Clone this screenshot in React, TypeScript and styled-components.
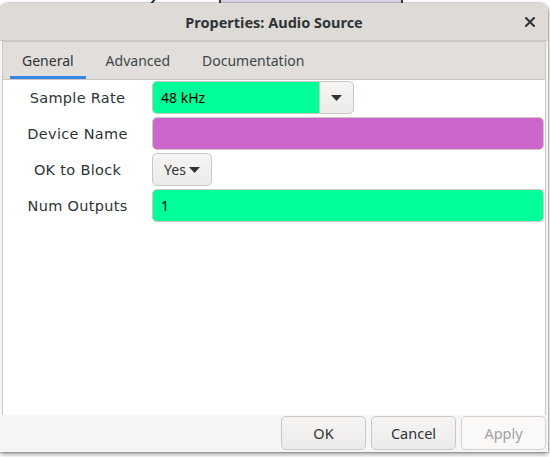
import styled, { createGlobalStyle } from "styled-components";

const GlobalStyle = createGlobalStyle`
  html, body {
    margin: 0;
    padding: 0;
    background: #ffffff;
    overflow: hidden;
  }
`;

const Desktop = styled.div`
  position: relative;
  width: 550px;
  height: 457px;
  padding-top: 3px;
  box-sizing: border-box;
  background: #ffffff;
  font-family: "Noto Sans", "DejaVu Sans", sans-serif;
  color: #2e3436;
`;

/* things on the canvas behind the dialog */
const BehindWire = styled.div`
  position: absolute;
  left: 152px;
  top: -3px;
  width: 2px;
  height: 9px;
  background: #2e3436;
  transform: rotate(40deg);
`;

const BehindBlock = styled.div`
  position: absolute;
  left: 219px;
  top: 0;
  width: 180px;
  height: 6px;
  background: #d9d6ea;
  border-left: 2px solid #3a3a3a;
  border-right: 2px solid #3a3a3a;
`;

const Window = styled.div`
  position: relative;
  width: 548px;
  height: 449px;
  display: flex;
  flex-direction: column;
  background: #f6f5f4;
  border-radius: 8px 8px 0 0;
  box-shadow: 0 0 0 1px rgba(0, 0, 0, 0.12), 0 2px 5px rgba(0, 0, 0, 0.45);
  overflow: hidden;
`;

const TitleBar = styled.div`
  height: 37px;
  flex: none;
  display: flex;
  align-items: center;
  justify-content: center;
  position: relative;
  background: #dedad6;
  border-bottom: 1px solid #cdc7c2;
`;

const Title = styled.div`
  font-weight: 700;
  font-size: 14.5px;
  color: #2e3436;
`;

const CloseButton = styled.div`
  position: absolute;
  right: 13px;
  top: 13px;
  width: 11px;
  height: 11px;
  display: flex;
  align-items: center;
  justify-content: center;
`;

const Notebook = styled.div`
  flex: 1;
  display: flex;
  flex-direction: column;
  margin: 0 2px;
  border: 1px solid #cdc7c2;
  border-bottom: none;
  background: #ffffff;
`;

const TabBar = styled.div`
  height: 37px;
  flex: none;
  display: flex;
  gap: 8px;
  padding-left: 7px;
  background: #e1dedb;
  border-bottom: 1px solid #cdc7c2;
`;

const Tab = styled.div<{ $active?: boolean }>`
  display: flex;
  align-items: center;
  padding: 0 12px;
  font-size: 14px;
  color: ${(p) => (p.$active ? "#2e3436" : "#3d4548")};
  box-shadow: ${(p) => (p.$active ? "inset 0 -3px 0 #3584e4" : "none")};
`;

const Page = styled.div`
  flex: 1;
  display: grid;
  grid-template-columns: 149px 1fr;
  grid-auto-rows: 33px;
  row-gap: 3px;
  align-content: start;
  padding: 1px 1px 0 0;
`;

const Label = styled.div`
  display: flex;
  align-items: center;
  justify-content: center;
  font-family: "DejaVu Sans", sans-serif;
  font-size: 14.5px;
  letter-spacing: 0.3px;
  color: #2e3436;
`;

const Entry = styled.div<{ $bg: string }>`
  display: flex;
  align-items: center;
  padding: 0 8px;
  background: ${(p) => p.$bg};
  border: 1px solid #cdc7c2;
  border-radius: 5px;
  font-size: 14px;
  color: #000000;
  box-sizing: border-box;
`;

const Combo = styled.div`
  display: flex;
  width: 202px;
`;

const ComboEntry = styled(Entry)`
  flex: 1;
  border-radius: 5px 0 0 5px;
  border-right: none;
`;

const ComboButton = styled.div`
  width: 35px;
  display: flex;
  align-items: center;
  justify-content: center;
  background: linear-gradient(#f6f5f4, #edebe9);
  border: 1px solid #cdc7c2;
  border-radius: 0 5px 5px 0;
  box-sizing: border-box;
`;

const DropCell = styled.div`
  display: flex;
`;

const DropButton = styled.div`
  width: 60px;
  display: flex;
  align-items: center;
  justify-content: center;
  gap: 3px;
  background: linear-gradient(#f6f5f4, #edebe9);
  border: 1px solid #cdc7c2;
  border-radius: 5px;
  font-size: 14px;
  color: #2e3436;
  box-sizing: border-box;
`;

const ActionArea = styled.div`
  height: 37px;
  flex: none;
  display: flex;
  justify-content: flex-end;
  align-items: flex-start;
  gap: 5px;
  padding: 1px 2px 0 0;
  box-sizing: border-box;
  background: #f6f5f4;
`;

const ActionButton = styled.div<{ $disabled?: boolean }>`
  width: 85px;
  height: 34px;
  display: flex;
  align-items: center;
  justify-content: center;
  border: 1px solid #cdc7c2;
  border-radius: 5px;
  box-sizing: border-box;
  font-size: 14.5px;
  background: ${(p) =>
    p.$disabled ? "#faf9f8" : "linear-gradient(#f6f5f4, #edebe9)"};
  color: ${(p) => (p.$disabled ? "#a0a3a3" : "#2e3436")};
  border-color: ${(p) => (p.$disabled ? "#d5d0cc" : "#cdc7c2")};
`;

const Arrow = () => (
  <svg width="11" height="6" viewBox="0 0 11 6">
    <path d="M0 0h11L5.5 6z" fill="#2e3436" />
  </svg>
);

const CloseIcon = () => (
  <svg width="10" height="10" viewBox="0 0 10 10">
    <path
      d="M1 1l8 8M9 1l-8 8"
      stroke="#2e3436"
      strokeWidth="2"
      strokeLinecap="square"
    />
  </svg>
);

function App() {
  return (
    <>
      <GlobalStyle />
      <Desktop>
        <BehindWire />
        <BehindBlock />
        <Window>
          <TitleBar>
            <Title>Properties: Audio Source</Title>
            <CloseButton>
              <CloseIcon />
            </CloseButton>
          </TitleBar>
          <Notebook>
            <TabBar>
              <Tab $active>General</Tab>
              <Tab>Advanced</Tab>
              <Tab>Documentation</Tab>
            </TabBar>
            <Page>
              <Label>Sample Rate</Label>
              <Combo>
                <ComboEntry $bg="#00ff99">48 kHz</ComboEntry>
                <ComboButton>
                  <Arrow />
                </ComboButton>
              </Combo>

              <Label>Device Name</Label>
              <Entry $bg="#cc66cc" />

              <Label>OK to Block</Label>
              <DropCell>
                <DropButton>
                  Yes
                  <Arrow />
                </DropButton>
              </DropCell>

              <Label>Num Outputs</Label>
              <Entry $bg="#00ff99">1</Entry>
            </Page>
          </Notebook>
          <ActionArea>
            <ActionButton>OK</ActionButton>
            <ActionButton>Cancel</ActionButton>
            <ActionButton $disabled>Apply</ActionButton>
          </ActionArea>
        </Window>
      </Desktop>
    </>
  );
}

export default App;
